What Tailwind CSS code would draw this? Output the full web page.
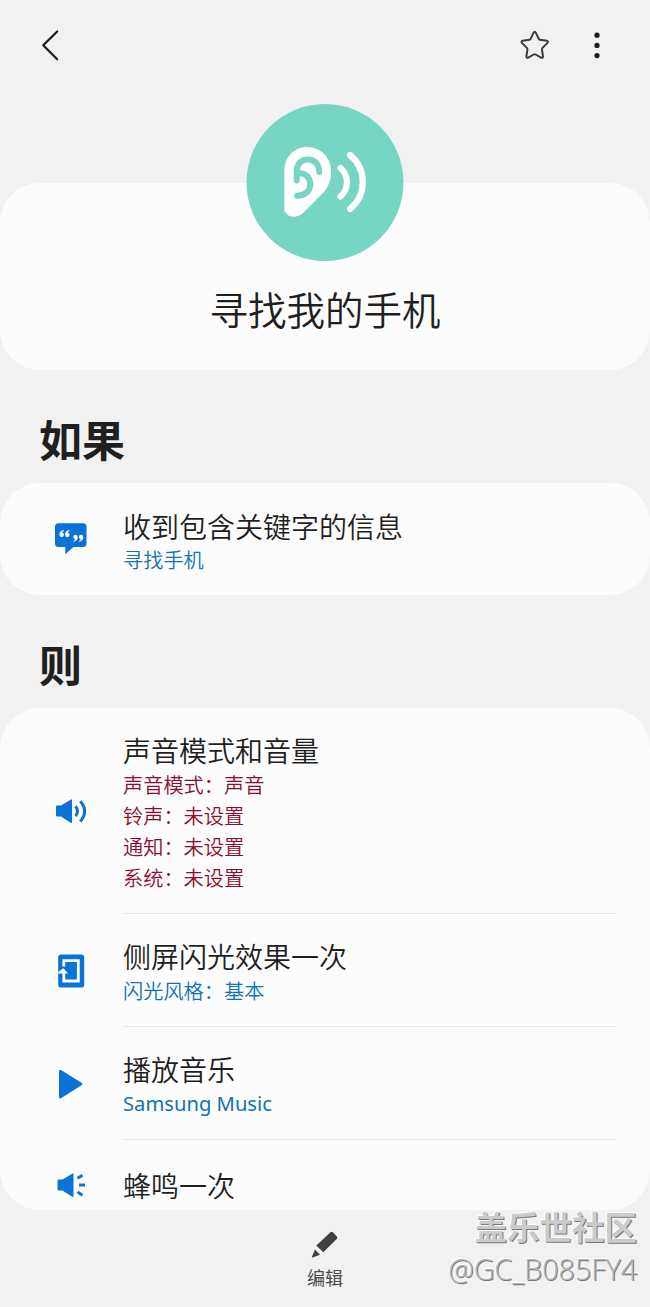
<!DOCTYPE html>
<html lang="zh-CN">
<head>
    <meta charset="UTF-8">
    <meta name="viewport" content="width=device-width, initial-scale=1.0">
    <title>寻找我的手机</title>
    <script src="https://cdn.jsdelivr.net/npm/@tailwindcss/browser@4"></script>
</head>
<body class="bg-[#f1f1f1] text-[#1f1f1f] font-['Noto_Sans_CJK_SC',sans-serif] overflow-hidden">
    <div class="relative w-[650px] h-[1307px] flex flex-col overflow-hidden">

        <!-- Top bar -->
        <header class="h-[183px] shrink-0 flex items-start justify-between pt-[25px] pl-[30px] pr-[33px]">
            <svg class="w-10 h-10" viewBox="0 0 40 40" fill="none" stroke="#1a1a1a" stroke-width="2.2" stroke-linecap="round" stroke-linejoin="round">
                <path d="M27.200 6.500L13.200 20.300L27.200 34.300"/>
            </svg>
            <div class="flex gap-[22px]">
                <svg class="w-10 h-10" viewBox="0 0 40 40" fill="none" stroke="#3c3c3c" stroke-width="2" stroke-linejoin="round">
                    <path d="M18.600 7.700Q19.700 5.700 20.800 7.700L23.600 13.700Q24 14.700 25 14.800L31.600 15.800Q33.800 16.300 32.300 18.100L27.500 22.900Q26.800 23.600 27 24.700L28 31.300Q28.100 33.400 26.200 32.600L20.600 29.500Q19.700 29 18.800 29.500L13.200 32.600Q11.300 33.400 11.400 31.300L12.400 24.700Q12.600 23.600 11.900 22.900L7.100 18.100Q5.600 16.300 7.800 15.800L14.400 14.800Q15.400 14.700 15.800 13.700Z"/>
                </svg>
                <svg class="w-10 h-10" viewBox="0 0 40 40" fill="#1a1a1a">
                    <circle cx="20" cy="10.200" r="2.600"/>
                    <circle cx="20" cy="20.400" r="2.600"/>
                    <circle cx="20" cy="30.600" r="2.600"/>
                </svg>
            </div>
        </header>

        <!-- Routine name -->
        <section class="h-[187px] shrink-0 bg-[#fcfcfc] rounded-[40px] flex flex-col items-center">
            <svg class="w-[158px] h-[158px] -mt-[80px] shrink-0" viewBox="0 0 158 158" fill="none" stroke-linecap="round">
                <circle cx="79" cy="79.500" r="78.500" fill="#76d5c3"/>
                <path fill="#fff" d="M38.300 68C38.300 54 48 44 61 44C75 44 85 55 85 68C85 78 82 85 76 91C69 98 63 104 57 110C53 114 46 114.500 42.500 112.500L38.300 108Z"/>
                <path stroke="#76d5c3" stroke-width="6" d="M50.700 77.500V69C50.700 61 55 56.500 62 56.500C69 56.500 73.300 62 73.300 69"/>
                <path stroke="#76d5c3" stroke-width="6" d="M52.500 70C60 70 64.300 75 64.300 81C64.300 88 59 92.700 51 92.700"/>
                <path stroke="#fff" stroke-width="6.200" d="M94.500 65A19 19 0 0 1 94.500 93.500"/>
                <path stroke="#fff" stroke-width="6.200" d="M104 52A35 35 0 0 1 104 106"/>
            </svg>
            <h1 class="mt-[17px] text-[38.500px] leading-[60px] font-[350]">寻找我的手机</h1>
        </section>

        <!-- If -->
        <h2 class="h-[113px] shrink-0 pl-[39px] pt-[38px] text-[43px] leading-[60px] font-bold">如果</h2>
        <section class="h-[112px] shrink-0 bg-[#fcfcfc] rounded-[40px] flex items-center pl-[51px]">
            <svg class="w-10 h-10" viewBox="0 0 40 40">
                <path fill="#0b72d7" d="M7.500 4.300H32Q35.500 4.300 35.500 7.800V24.500Q35.500 28 32 28H22.500L14.300 35.300V28H7.500Q4 28 4 24.500V7.800Q4 4.300 7.500 4.300Z"/>
                <g fill="#fff">
                    <path d="M12.600 11Q8.300 12.300 8.500 15.500A2.200 2.200 0 1 0 10.900 13.600Q11.200 12.500 12.900 11.900Z"/>
                    <path d="M12.600 11Q8.300 12.300 8.500 15.500A2.200 2.200 0 1 0 10.900 13.600Q11.200 12.500 12.900 11.900Z" transform="translate(5.600 0)"/>
                    <path d="M12.600 11Q8.300 12.300 8.500 15.500A2.200 2.200 0 1 0 10.900 13.600Q11.200 12.500 12.900 11.900Z" transform="rotate(180 20.400 16.900)"/>
                    <path d="M12.600 11Q8.300 12.300 8.500 15.500A2.200 2.200 0 1 0 10.900 13.600Q11.200 12.500 12.900 11.900Z" transform="rotate(180 17.600 16.900)"/>
                </g>
            </svg>
            <div class="pl-8 pt-[4px] font-[350]">
                <p class="text-[28px] leading-[36px]">收到包含关键字的信息</p>
                <p class="text-[20.200px] leading-[31px] text-[#1272b6]">寻找手机</p>
            </div>
        </section>

        <!-- Then -->
        <h2 class="h-[113px] shrink-0 pl-[39px] pt-[38px] text-[43px] leading-[60px] font-bold">则</h2>
        <section class="h-[502px] shrink-0 bg-[#fcfcfc] rounded-[40px] pl-[51px] pr-[33px] font-[350]">
            <div class="h-[206px] flex items-center">
                <svg class="w-10 h-10" viewBox="0 0 40 40" fill="none" stroke="#0b72d7" stroke-width="3">
                    <path fill="#0b72d7" stroke="none" d="M6 14.500Q5 14.500 5 15.500V24.500Q5 25.500 6 25.500H10L20 32Q21 32.400 21 31.400V9Q21 8 20 8.400L10 14.500Z"/>
                    <path d="M24.500 15.200Q28.500 20 24.500 25"/>
                    <path d="M29.300 10.200Q38 20 29.300 30.500"/>
                </svg>
                <div class="ml-8 flex-1 h-full pt-[24px] border-b border-[#e6e6e6]">
                    <p class="text-[28px] leading-[37px]">声音模式和音量</p>
                    <div class="text-[20.200px] leading-[31px] text-[#8f0a31]">
                        <p>声音模式：声音</p>
                        <p>铃声：未设置</p>
                        <p>通知：未设置</p>
                        <p>系统：未设置</p>
                    </div>
                </div>
            </div>
            <div class="h-[113px] flex items-center">
                <svg class="w-10 h-10" viewBox="0 0 40 40">
                    <rect x="7.200" y="3.500" width="26" height="33" rx="2.800" fill="#0b72d7"/>
                    <path fill="none" stroke="#fff" stroke-width="2.800" d="M12.800 15.500V9.700H27.300V30H12.800V21"/>
                    <path fill="#fff" d="M12.500 17.200L17 22.500H7.200V21Z"/>
                </svg>
                <div class="ml-8 flex-1 h-full pt-[24px] border-b border-[#e6e6e6]">
                    <p class="text-[28px] leading-[37px]">侧屏闪光效果一次</p>
                    <p class="text-[20.200px] leading-[31px] text-[#1272b6]">闪光风格：基本</p>
                </div>
            </div>
            <div class="h-[113px] flex items-center">
                <svg class="w-10 h-10" viewBox="0 0 40 40">
                    <path fill="#0b72d7" d="M8 7.500Q8 4.800 10.300 6.300L30.500 18.800Q32.500 20 30.500 21.300L10.300 34Q8 35.300 8 32.700Z"/>
                </svg>
                <div class="ml-8 flex-1 h-full pt-[24px] border-b border-[#e6e6e6]">
                    <p class="text-[28px] leading-[37px]">播放音乐</p>
                    <p class="text-[20.200px] leading-[31px] text-[#1272b6] font-normal font-['Noto_Sans',sans-serif]">Samsung Music</p>
                </div>
            </div>
            <div class="h-[70px] flex items-start pt-[25px]">
                <svg class="w-10 h-10" viewBox="0 0 40 40" fill="none" stroke="#0b72d7" stroke-width="2.800">
                    <path fill="#0b72d7" stroke="none" d="M7.500 14.500Q6.500 14.500 6.500 15.500V24.500Q6.500 25.500 7.500 25.500H11.500L21.500 32Q22.500 32.400 22.500 31.400V9Q22.500 8 21.500 8.400L11.500 14.500Z"/>
                    <path d="M26.500 13.300L31.500 10.200M28 20H34M26.500 27L31.500 30.200"/>
                </svg>
                <p class="ml-8 text-[28px] leading-[36px] pt-[2px]">蜂鸣一次</p>
            </div>
        </section>

        <!-- Bottom bar -->
        <footer class="flex-1 flex flex-col items-center pt-[20px] text-[#4a4a4a]">
            <svg class="w-[30px] h-[30px]" viewBox="0 0 30 30" fill="#404040">
                <path d="M6.300 15.500L20.500 2.300Q21.800 1.200 23.200 2.500L26.800 6.500Q28 7.800 26.700 9.100L13.300 22.300Z"/>
                <path d="M5 19.400L10 24.800L2.800 27.400Q1.600 27.700 2 26.400Z"/>
            </svg>
            <span class="text-[18px] leading-[28px] mt-[3px]">编辑</span>
        </footer>

        <!-- Watermark -->
        <div class="absolute right-[13px] bottom-[17px] text-right text-[#cbcbcb] [text-shadow:1px_1px_0_#777,-1px_-1px_0_#fff]">
            <p class="text-[32.500px] leading-[42px] font-bold">盖乐世社区</p>
            <p class="text-[28.700px] leading-[43px] text-[#b5b5b5] font-light font-['Open_Sans',sans-serif]">@GC_B085FY4</p>
        </div>
    </div>
</body>
</html>
